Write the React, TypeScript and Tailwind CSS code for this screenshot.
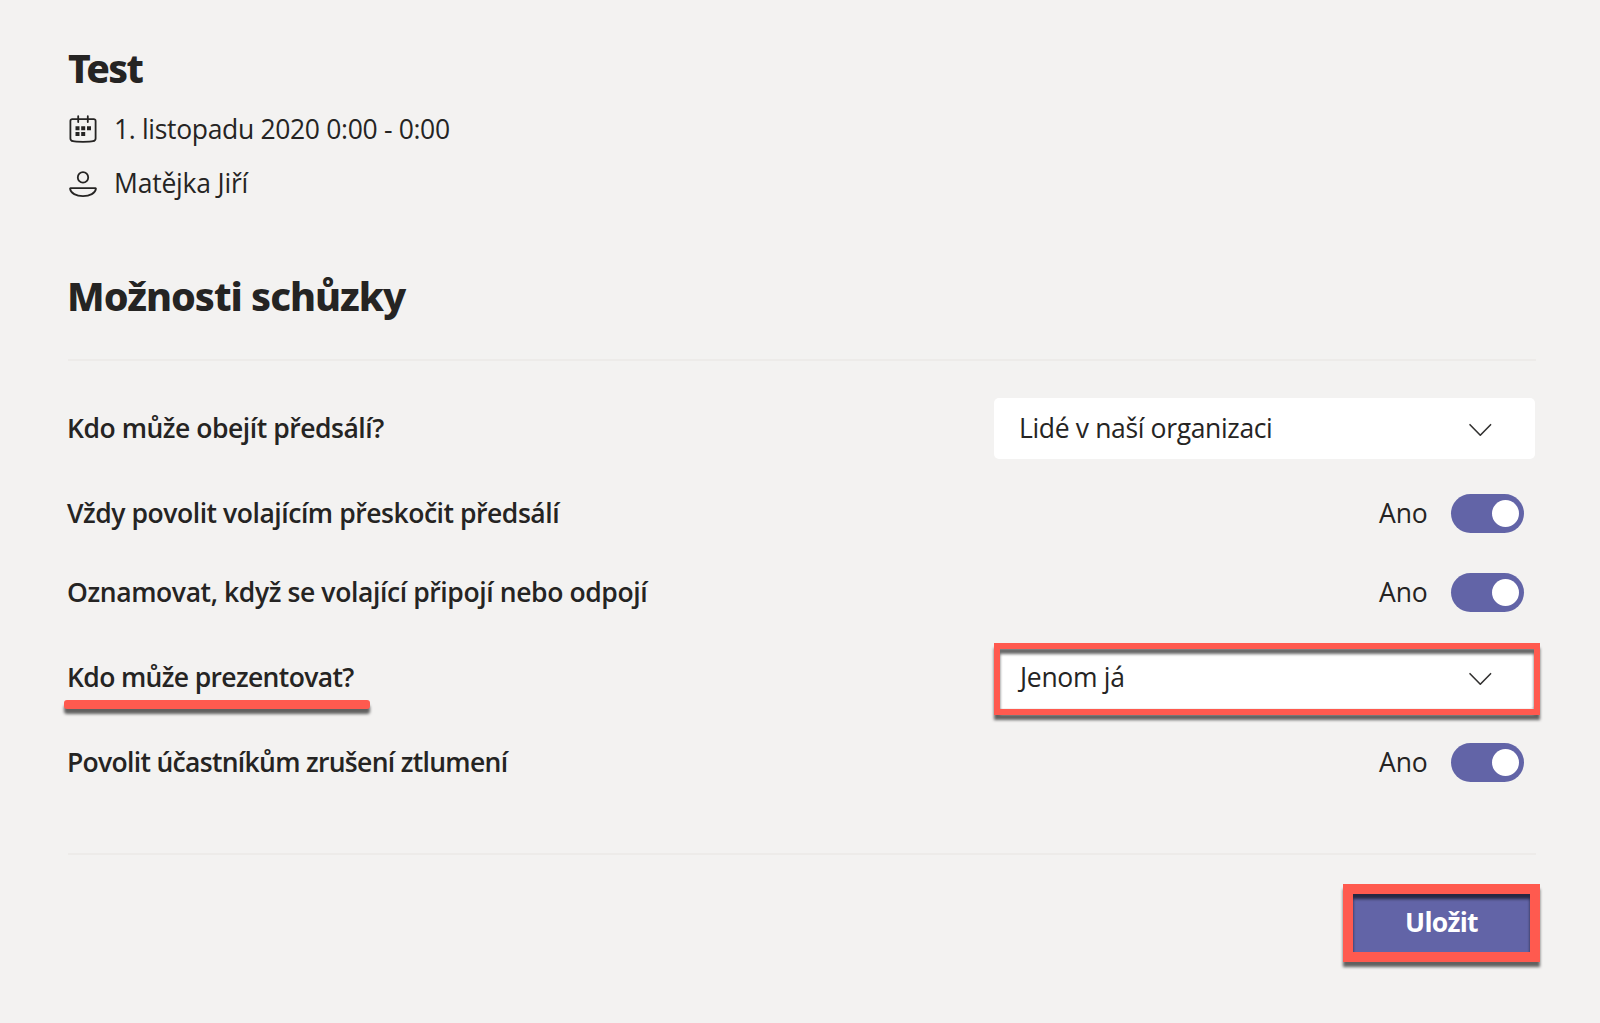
import React from 'react'

interface OptionRowProps {
  label: string;
  labelClass: string;
  className: string;
  children: React.ReactNode;
}

function OptionRow({ label, labelClass, className, children }: OptionRowProps) {
  return (
    <div className={`flex items-center justify-between ${className}`}>
      <span className={`-ml-px pb-px font-semibold whitespace-nowrap ${labelClass}`}>{label}</span>
      {children}
    </div>
  )
}

function Toggle() {
  return (
    <div className="flex items-center mr-3">
      <span className="w-[72px] pb-px tracking-[-0.1px]">Ano</span>
      <button type="button" role="switch" aria-checked="true" className="flex items-center justify-end w-[73px] h-[39px] pr-[5px] rounded-full bg-[#6264a7]">
        <span className="size-[27.5px] rounded-full bg-white" />
      </button>
    </div>
  )
}

function Select({ value, valueClass }: { value: string; valueClass: string }) {
  return (
    <div className={`flex items-center justify-between w-[541px] h-[61px] mr-px pr-[43px] rounded-[5px] bg-white ${valueClass}`}>
      <span className="pb-px whitespace-nowrap">{value}</span>
      <svg className="mt-0.5" width="24" height="14" viewBox="0 0 24 14" fill="none" stroke="#323130" strokeWidth="1.6" strokeLinecap="round" strokeLinejoin="round">
        <path d="M2 1.7 12.3 12.2 22.6 1.7" />
      </svg>
    </div>
  )
}

function CalendarIcon() {
  return (
    <svg width="30" height="30" viewBox="0 0 30 30" fill="none" stroke="#252423" strokeWidth="1.8" strokeLinecap="round">
      <path d="M4.2 5.2h21.6a1.8 1.8 0 0 1 1.8 1.8v17.4c0 1.6-1 2.4-2.6 2.8-3 .8-17 .8-20 0-1.6-.4-2.6-1.2-2.6-2.8V7a1.8 1.8 0 0 1 1.8-1.8z" />
      <path d="M10.2 2.2v5.8M19.8 2.2v5.8" />
      <path d="M7.5 12.2h4v4h-4zM13.2 12.2h4v4h-4zM19 12.2h4v4h-4zM7.5 18h4v4h-4zM13.2 18h4v4h-4z" fill="#252423" stroke="none" />
    </svg>
  )
}

function PersonIcon() {
  return (
    <svg width="30" height="30" viewBox="0 0 30 30" fill="none" stroke="#252423" strokeWidth="1.8" strokeLinejoin="round">
      <circle cx="15" cy="9.4" r="5.2" />
      <path d="M2.5 20.2h25c.3 0 .5.3.4.7-.6 4.4-6 7.2-12.9 7.2S2.7 25.3 2.1 20.9c-.1-.4.1-.7.4-.7z" />
    </svg>
  )
}

export default function App() {
  return (
    <main className="w-[1600px] h-[1023px] pt-11 pl-[68px] pr-16 overflow-hidden bg-[#f3f2f1] text-[#252423] font-['Open_Sans','Noto_Sans',sans-serif] text-[26.5px] leading-[40px]">
      <h1 className="font-['Noto_Sans',sans-serif] text-[39px] leading-[48px] font-extrabold tracking-[-1.7px]">Test</h1>
      <div className="flex items-center gap-4 mt-[17px]">
        <CalendarIcon />
        <span className="tracking-[-0.33px]">1. listopadu 2020 0:00 - 0:00</span>
      </div>
      <div className="flex items-center gap-4 mt-3.5">
        <PersonIcon />
        <span className="tracking-[-0.2px]">Matějka Jiří</span>
      </div>

      <h2 className="mt-[65px] -ml-px font-['Noto_Sans',sans-serif] text-[39.5px] leading-[56px] font-extrabold tracking-[-1px]">Možnosti schůzky</h2>
      <hr className="mt-[35px] h-0.5 border-0 bg-[#edebe9]" />

      <OptionRow label="Kdo může obejít předsálí?" labelClass="tracking-[-0.46px]" className="mt-[37px] h-[61px]">
        <Select value="Lidé v naší organizaci" valueClass="pl-[25px] tracking-[-0.35px]" />
      </OptionRow>
      <OptionRow label="Vždy povolit volajícím přeskočit předsálí" labelClass="tracking-[-0.45px]" className="mt-[35px] h-[39px]">
        <Toggle />
      </OptionRow>
      <OptionRow label="Oznamovat, když se volající připojí nebo odpojí" labelClass="tracking-[-0.39px]" className="mt-10 h-[39px]">
        <Toggle />
      </OptionRow>
      <div className="relative mt-[35px]">
        <OptionRow label="Kdo může prezentovat?" labelClass="tracking-[-0.64px]" className="h-[61px]">
          <Select value="Jenom já" valueClass="pl-[26px] tracking-[-0.3px]" />
        </OptionRow>
        {/* highlights over the presenter setting */}
        <div className="absolute left-[-4px] top-[53px] w-[306px] h-[8.5px] rounded-[3px] bg-[#ff5a4f] drop-shadow-[0_5px_1.5px_rgba(0,0,0,0.6)]" />
        <div className="absolute left-[926px] top-[-4px] w-[546px] h-[71.5px] border-6 border-[#ff5a4f] drop-shadow-[0_5px_1.5px_rgba(0,0,0,0.6)]" />
      </div>
      <OptionRow label="Povolit účastníkům zrušení ztlumení" labelClass="tracking-[-0.69px]" className="mt-[35px] h-[39px]">
        <Toggle />
      </OptionRow>

      <hr className="mt-[71px] h-0.5 border-0 bg-[#edebe9]" />
      <div className="relative flex justify-end mt-[29px] -mr-1">
        <button type="button" className="w-[197px] h-[77px] pb-px bg-[#6264a7] font-bold text-white tracking-[-0.7px]">Uložit</button>
        <div className="absolute right-0 top-0 w-[197px] h-[78px] border-10 border-[#ff5a4f] drop-shadow-[0_5px_1.5px_rgba(0,0,0,0.6)]" />
      </div>
    </main>
  )
}
